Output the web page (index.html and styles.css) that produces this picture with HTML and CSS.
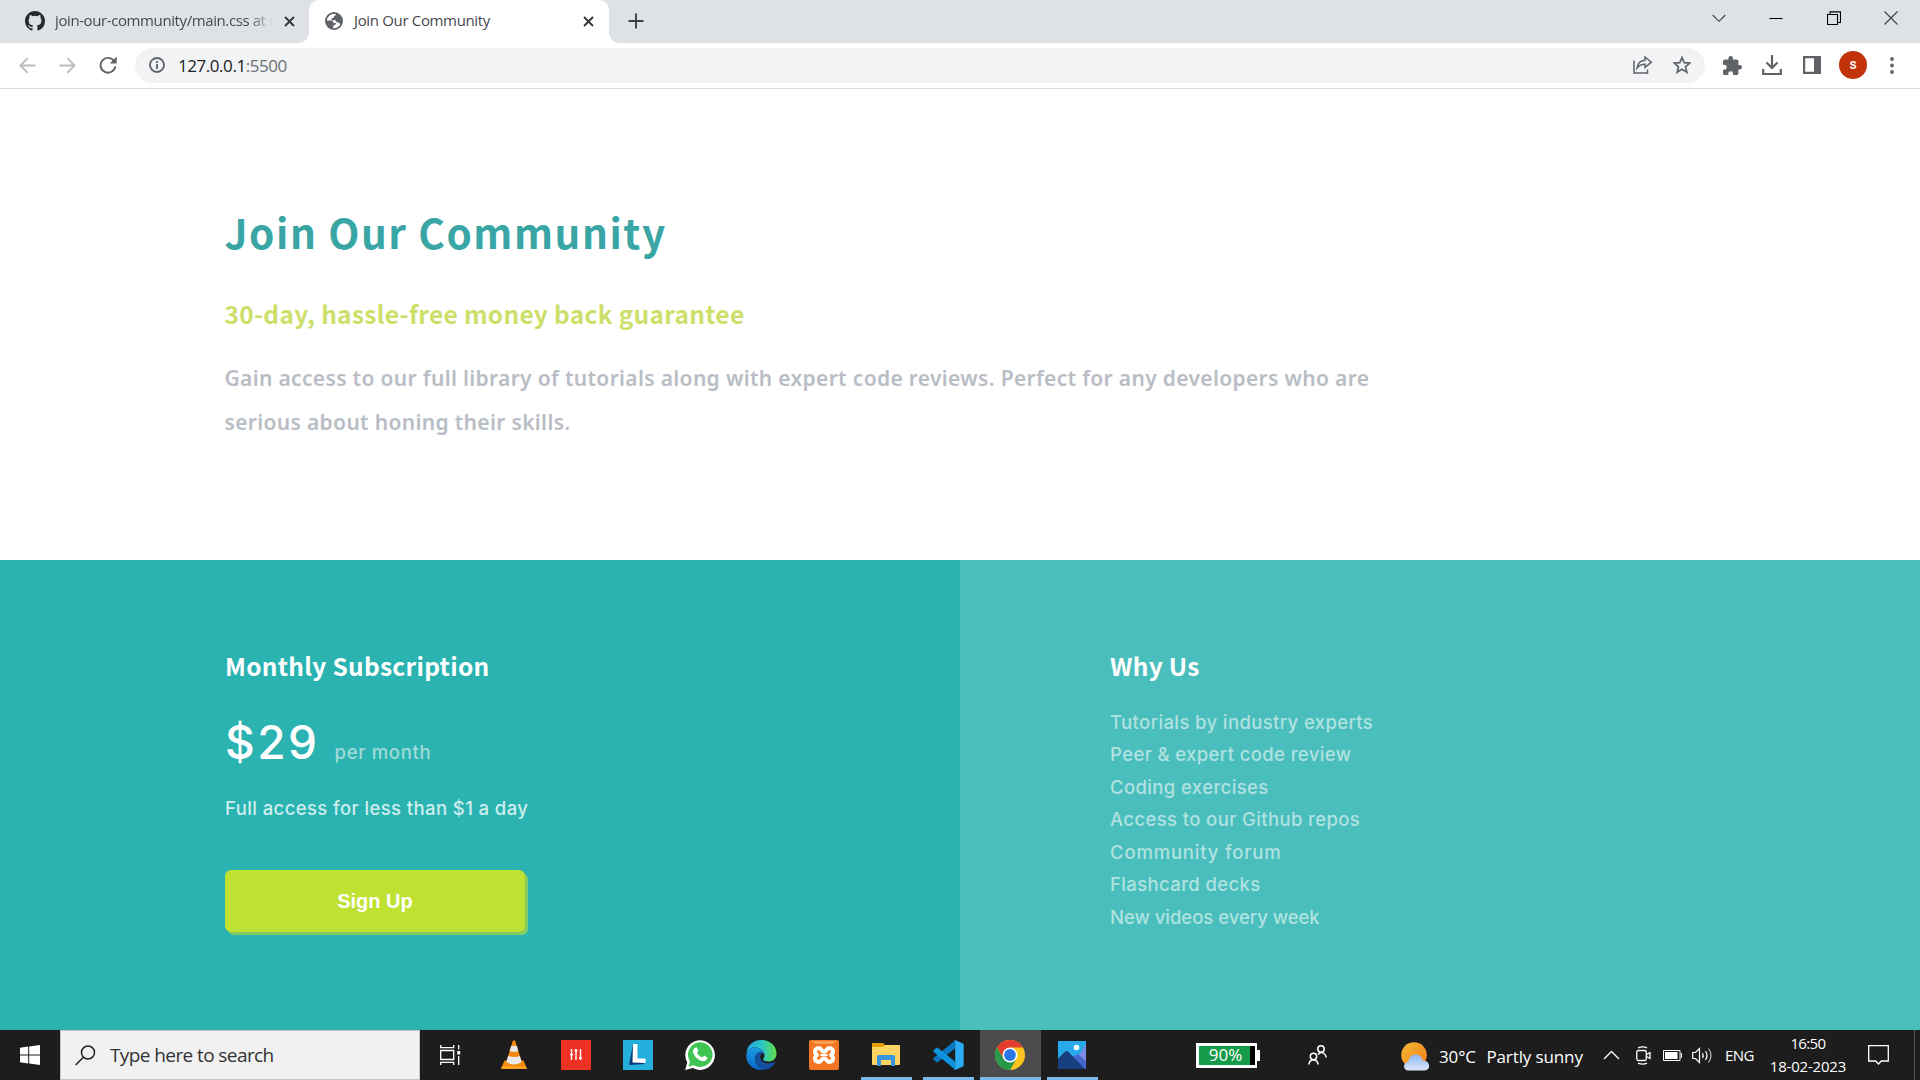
FILE: index.html
```html
<!DOCTYPE html>
<html lang="en">
<head>
<meta charset="utf-8">
<title>Join Our Community</title>
<link rel="stylesheet" href="styles.css">
</head>
<body>
<div class="screen">
  <header class="tabs">
    <div class="tab tab-github">
      <svg class="icon20" viewBox="0 0 16 16"><path fill="#24292f" d="M8 0C3.58 0 0 3.58 0 8c0 3.54 2.29 6.53 5.47 7.59.4.07.55-.17.55-.38 0-.19-.01-.82-.01-1.49-2.01.37-2.53-.49-2.69-.94-.09-.23-.48-.94-.82-1.13-.28-.15-.68-.52-.01-.53.63-.01 1.08.58 1.23.82.72 1.21 1.87.87 2.33.66.07-.52.28-.87.51-1.07-1.78-.2-3.64-.89-3.64-3.95 0-.87.31-1.59.82-2.15-.08-.2-.36-1.02.08-2.12 0 0 .67-.21 2.2.82a7.6 7.6 0 0 1 4 0c1.53-1.04 2.2-.82 2.2-.82.44 1.1.16 1.92.08 2.12.51.56.82 1.27.82 2.15 0 3.07-1.87 3.75-3.65 3.95.29.25.54.73.54 1.48 0 1.07-.01 1.93-.01 2.2 0 .21.15.46.55.38A8 8 0 0 0 16 8c0-4.42-3.58-8-8-8z"/></svg>
      <span class="tab-title tab-title-faded">join-our-community/main.css at m</span>
      <svg class="tab-close" viewBox="0 0 11 11"><path d="M1 1l9 9M10 1l-9 9"/></svg>
    </div>
    <div class="tab tab-active">
      <svg class="icon18" viewBox="0 0 18 18"><circle cx="9" cy="9" r="9" fill="#5f6368"/><path fill="#fff" d="M8.2 1.9c-3.4.5-6 3.2-6.3 6.5l4.200.2c1.500.1 2.300 1 2.300 2.400l2.100.1c.8.3.6 1.400-.3 1.700l-1.700.4v1.800c-.4.8-1.100 1-1.500 1.100 3.400.7 6.800-.9 8.300-3.900-.7-.6-.9-1.500-1.900-1.700l-1.700-.3-1.200-1.900H7.200c-1.200-.1-1.100-1.500-.1-2.100l1.800-.7.2-1.400 1.600-.8V2.100z"/></svg>
      <span class="tab-title">Join Our Community</span>
      <svg class="tab-close" viewBox="0 0 11 11"><path d="M1 1l9 9M10 1l-9 9"/></svg>
    </div>
    <svg class="new-tab" viewBox="0 0 16 16"><path d="M8 0.500v15M.5 8h15"/></svg>
    <div class="window-controls">
      <svg width="14" height="14" viewBox="0 0 14 14"><path d="M.7 4l6.300 6.300L13.300 4"/></svg>
      <svg width="14" height="14" viewBox="0 0 14 14"><path stroke="#000" d="M.5 7.500h13"/></svg>
      <svg width="14" height="14" viewBox="0 0 14 14"><path stroke="#000" d="M.5 3.500h10v10H.5zM3 3V.9h10.500V11.500H11"/></svg>
      <svg width="14" height="14" viewBox="0 0 14 14"><path d="M.5.5l13 13M13.500.5l-13 13"/></svg>
    </div>
  </header>

  <div class="toolbar">
    <div class="nav">
      <svg class="faint" width="17" height="17" viewBox="0 0 17 17"><path d="M16.500 8.500H1.500M8.700 1.200L1.400 8.500l7.300 7.300"/></svg>
      <svg class="faint" width="17" height="17" viewBox="0 0 17 17"><path d="M.5 8.500h15M8.300 1.200l7.300 7.300-7.300 7.300"/></svg>
      <svg class="reload" width="18" height="18" viewBox="0 0 18 18"><path d="M15.300 5.400A7.400 7.400 0 1 0 16.300 10.300"/><path class="solid" d="M17.700.5v7h-7z"/></svg>
    </div>
    <div class="omnibox">
      <svg width="16" height="16" viewBox="0 0 16 16"><circle cx="8" cy="8" r="7" fill="none" stroke="#5f6368" stroke-width="1.800"/><path d="M8 7v5M8 4v1.900" stroke="#5f6368" stroke-width="1.800"/></svg>
      <span class="url">127.0.0.1<span class="port">:5500</span></span>
      <svg class="share" width="20" height="18" viewBox="0 0 20 18"><path d="M1 4.500V17h13.500v-3.500M12 1l6.300 5.200L12 11.400V8.300C8.300 8.300 6 9.300 4 12c.5-4 3-7.300 8-7.700z"/></svg>
      <svg class="star" width="18" height="18" viewBox="0 0 18 18"><path d="M9 1.500l2.200 5.100 5.500.5-4.200 3.700 1.300 5.400L9 13.300l-4.800 2.900 1.300-5.400-4.200-3.700 5.500-.5z"/></svg>
    </div>
    <div class="extensions">
      <svg width="19" height="19" viewBox="2 1 21 21"><path fill="#5f6368" d="M20.500 11H19V7c0-1.100-.9-2-2-2h-4V3.500a2.500 2.500 0 0 0-5 0V5H4c-1.100 0-2 .9-2 2v3.800h1.500a2.700 2.700 0 0 1 0 5.400H2V20c0 1.100.9 2 2 2h3.800v-1.500a2.700 2.700 0 0 1 5.400 0V22H17c1.100 0 2-.9 2-2v-4h1.500a2.500 2.500 0 0 0 0-5z"/></svg>
      <svg width="20" height="20" viewBox="0 0 20 20"><path fill="none" stroke="#5f6368" stroke-width="2.200" d="M10 0v12.500M4.500 7.500l5.500 5.500 5.500-5.500M1.200 14v5h17.600v-5"/></svg>
      <svg width="18" height="18" viewBox="0 0 18 18"><path fill="#5f6368" fill-rule="evenodd" d="M0 0h18v18H0zM2.200 2.200v13.600h8.800V2.200z"/></svg>
      <span class="avatar">s</span>
      <svg width="4" height="17" viewBox="0 0 4 17"><g fill="#5f6368"><circle cx="2" cy="2" r="1.900"/><circle cx="2" cy="8.500" r="1.900"/><circle cx="2" cy="15" r="1.900"/></g></svg>
    </div>
  </div>

  <main>
    <section class="hero">
      <h1>Join Our Community</h1>
      <h2>30-day, hassle-free money back guarantee</h2>
      <p>Gain access to our full library of tutorials along with expert code reviews. Perfect for any developers who are serious about honing their skills.</p>
    </section>
    <section class="panels">
      <div class="subscription">
        <h3>Monthly Subscription</h3>
        <div class="price"><span class="amount">$29</span><span class="period">per month</span></div>
        <p class="access">Full access for less than $1 a day</p>
        <button class="signup">Sign Up</button>
      </div>
      <div class="why">
        <h3>Why Us</h3>
        <ul>
          <li>Tutorials by industry experts</li>
          <li>Peer &amp; expert code review</li>
          <li>Coding exercises</li>
          <li>Access to our Github repos</li>
          <li class="wide">Community forum</li>
          <li>Flashcard decks</li>
          <li class="tight">New videos every week</li>
        </ul>
      </div>
    </section>
  </main>

  <footer class="taskbar">
    <div class="start"><svg width="20" height="20" viewBox="0 0 20 20"><path fill="#fff" d="M0 2.700l8.200-1.200v8H0zM9.200 1.400L20 0v9.500H9.200zM0 10.500h8.200v8L0 17.300zM9.200 10.500H20V20L9.200 18.600z"/></svg></div>
    <div class="search">
      <svg width="21" height="21" viewBox="0 0 21 21"><circle cx="13" cy="7.500" r="6.500"/><path d="M8.300 12.300L.7 20"/></svg>
      <span>Type here to search</span>
    </div>
    <div class="app taskview"><svg width="21" height="20" viewBox="0 0 21 20"><g fill="none" stroke="#fff" stroke-width="1.300"><path d="M.7 0v2.700h13V0M.7 20v-2.700h13V20M.7 5.500h13v9H.7zM18.700 0v4.500M18.700 11v9"/></g><path fill="#fff" d="M17.200 6h3v3.500h-3z"/></svg></div>

    <div class="app"><svg width="26" height="30" viewBox="0 0 26 30"><path fill="#f28c0c" d="M3.500 20.500h19l3.300 7.800c.1.500-.1.700-.5.700H.7c-.4 0-.6-.3-.5-.700z"/><path fill="#ffa829" d="M1 26.500h24l.8 2H.2z"/><path fill="#f58712" d="M11.800.8q1.200-1 2.400 0l6.500 21.200q-7.700 5-15.400 0z"/><path fill="#e9e9e9" d="M10.200 6h5.600l1.600 5q-4.400 1.700-8.800 0zM7.100 16q5.900 2 11.800 0l1.800 6q-7.700 5-15.400 0z"/></svg></div>
    <div class="app"><svg width="30" height="30" viewBox="0 0 30 30"><path fill="#ee3125" d="M0 0h30v30H0z"/><path stroke="#fff" stroke-width="1.400" d="M10.500 9v11M15 9v11M19.500 9v11"/><path stroke="#fff" stroke-width="1.500" d="M9 14.500h3M13.500 10.500h3M18 18h3"/></svg></div>
    <div class="app"><svg width="30" height="30" viewBox="0 0 30 30"><path fill="#24aedb" d="M0 0h30v30H0z"/><path fill="#073b73" d="M10 4L6 25l16-1-8-5z"/><path fill="#fff" d="M10 4h4.500v14.500H22.500V23L9.500 22.500z"/></svg></div>
    <div class="app"><svg width="30" height="30" viewBox="0 0 30 30"><path fill="#fff" d="M.2 30l2-7.600A14.800 14.800 0 1 1 7.800 28z"/><path fill="#3fc351" d="M3.600 26.500l1.400-5.100A12.300 12.300 0 1 1 9 25.200z"/><path fill="#fff" d="M10.600 7.400c.8-.3 1.200 0 1.500.7l1.100 2.600c.2.600-.9 1.600-1.200 2 1.200 2.300 2.700 3.700 5.200 4.700.6-.5 1.400-2 2-1.700l2.700 1.300c1.200.6-.4 3.800-2.300 4.100-5 .9-11.600-5.300-11.700-9.900 0-1.600 1.300-3.300 2.700-3.800z"/></svg></div>
    <div class="app"><svg width="31" height="30" viewBox="0 0 31 30"><defs><linearGradient id="edgeTop"><stop offset="0" stop-color="#22a5e5"/><stop offset=".5" stop-color="#2ac5c8"/><stop offset="1" stop-color="#62df4b"/></linearGradient><linearGradient id="edgeLow" x2="0" y2="1"><stop offset="0" stop-color="#1b9de2"/><stop offset="1" stop-color="#0866cb"/></linearGradient></defs><path fill="url(#edgeTop)" d="M.5 13C1 5.500 7 0 15.500 0 24 0 30.500 6 30.500 13.500c0 5.500-4 8-8 8-3.500 0-5.500-1-5.500-2.200 0-.8 1.500-1.500 1.500-4.300C18.500 10 13 7.500 9 7.500 5 7.500 2 9.500.5 13z"/><path fill="url(#edgeLow)" d="M.5 14C1.500 9.500 5.500 7.500 9.500 7.500c5 0 9 3.500 9 7.500-1-2-3-3-5-2.500-4 1-5 5-4 9 1 4.500 5 7.500 9.500 8C8 31.500-1 24 .5 14z"/><path fill="#124f9e" d="M10.500 14c-3 5-.5 14 7.500 15.700 5 0 9-3 11-7 .3-.7-.3-1-1-.6-6 3-12 1-13.500-3.600-.6-2 0-3.700 1.500-5.500-2-.8-4.500-.5-5.500 1z"/></svg></div>
    <div class="app"><svg width="30" height="30" viewBox="0 0 30 30"><rect width="30" height="30" rx="2" fill="#f37623"/><path fill="#fba66b" d="M3 1.500h24q-1 2-5 2H8q-4 0-5-2z"/><path fill="none" stroke="#fff" stroke-width="4" stroke-linejoin="round" d="M9.500 8c2.500-.5 2.500 3.500 5.500 3.500s3-4 5.500-3.500c4.500 1 4.500 4.500 1.500 7 3 2.500 3 6-1.500 7-2.500.5-2.500-3.500-5.500-3.500s-3 4-5.500 3.500c-4.500-1-4.500-4.500-1.500-7-3-2.500-3-6 1.500-7z"/><path stroke="#fff" stroke-width="2.500" d="M11.500 15h7"/></svg></div>
    <div class="app running"><svg width="28" height="30" viewBox="0 0 28 30"><path fill="#e0a100" d="M0 4q0-1 1-1h10l2 2v3H0z"/><path fill="#fcd462" d="M0 7h11l2-2h14q1 0 1 1v18q0 1-1 1H1q-1 0-1-1z"/><path fill="#3994de" d="M5 26v-9q0-2 2-2h14q2 0 2 2v9h-4v-6H9v6z"/></svg></div>
    <div class="app running"><svg width="31" height="30" viewBox="0 0 31 30"><path fill="#0a78c1" d="M22 .5v8L5 22q-1 .8-1.900 0L.7 19.800q-.8-.9 0-1.800z"/><path fill="#0f93dc" d="M22 29.500v-8L5 8q-1-.8-1.900 0L.7 10.200q-.8.900 0 1.800z"/><path fill="#2cacf4" d="M22.500.200L30 3.500q.7.400.7 1.200v20.600q0 .8-.7 1.200l-7.500 3.300q-1 .3-1.800-.5 1.500.5 1.500-1.200V2q0-1.800-1.500-1.300.8-.8 1.800-.5z"/></svg></div>
    <div class="app running focused"><svg width="30" height="30" viewBox="0 0 30 30"><circle cx="15" cy="15" r="15" fill="#fcc31e"/><path fill="#e33b2e" d="M2 7.500a15 15 0 0 1 26 0H15L8.500 18.800z"/><path fill="#26994a" d="M2 7.500l6.500 11.300L21.500 18.800 15 30A15 15 0 0 1 2 7.500z"/><circle cx="15" cy="15" r="7.500" fill="#fff"/><circle cx="15" cy="15" r="5.900" fill="#2b76e5"/></svg></div>
    <div class="app running"><svg width="28" height="28" viewBox="0 0 28 28"><path fill="#27a9ea" d="M0 0h28v28H0z"/><path fill="#7a8ce4" d="M28 3v25H12z"/><path fill="#4467c9" d="M13 18.500l5-4.700q1.500-1.200 3 0l7 6.700V28H13z"/><path fill="#173f80" d="M0 17.500L7 10.700q1.700-1.400 3.400 0L27 28H0z"/><circle cx="18.500" cy="6.500" r="2.800" fill="#fff"/></svg></div>

    <div class="battery"><span class="battery-body"><span class="battery-level">90%</span></span><span class="battery-nub"></span></div>
    <svg class="people" width="19" height="20" viewBox="0 0 19 20"><g fill="none" stroke="#fff" stroke-width="1.500"><circle cx="13" cy="4" r="3.200"/><circle cx="5.500" cy="11.500" r="3.200"/><path d="M10 9.500q3-3.500 6-1 2 1.500 2.200 4M.8 19.500q.5-4.500 4.700-4.800 4 .3 4.700 4.800"/></g></svg>
    <svg class="weather" width="29" height="29" viewBox="0 0 29 29"><defs><linearGradient id="sun" x2="1" y2="1"><stop offset="0" stop-color="#f4bd32"/><stop offset="1" stop-color="#f4781a"/></linearGradient><linearGradient id="cloud" x2="0" y2="1"><stop offset="0" stop-color="#8fb5f1"/><stop offset="1" stop-color="#dbe8fb"/></linearGradient></defs><circle cx="13" cy="13" r="12.800" fill="url(#sun)"/><path fill="url(#cloud)" d="M7.500 28.500C1.500 28.500 1.500 20.500 7.500 19.500 8.500 10.500 20 10.500 21.500 18.500c8-.5 9 10 2 10z"/></svg>
    <span class="temp">30°C</span><span class="sky">Partly sunny</span>
    <svg class="up" width="17" height="10" viewBox="0 0 17 10"><path d="M1 9l7.500-7.500L16 9"/></svg>
    <svg class="camera" width="15" height="19" viewBox="0 0 15 19"><g fill="none" stroke="#fff" stroke-width="1.300"><rect x=".8" y="4.500" width="9.500" height="10" rx="1.500"/><path d="M10.500 8.500l3.500-2v6l-3.500-2M2 1.800q5-2 9 0M2 17.200q5 2 9 0"/></g></svg>
    <svg class="cell" width="19" height="11" viewBox="0 0 19 11"><path fill="none" stroke="#fff" d="M.5.5h16.500v10H.5zM17.500 3.500h1v4h-1"/><path fill="#fff" d="M2 2h12.500v7H2z"/></svg>
    <svg class="speaker" width="21" height="17" viewBox="0 0 21 17"><g fill="none" stroke="#fff" stroke-width="1.200"><path d="M.7 5.500h2.800L7.500 1.500v14l-4-4H.7zM10.500 6q1.500 2.500 0 5M13.500 4q3 4.500 0 9"/><path stroke="#bbb" d="M16.500 1.500q5 7 0 14"/></g></svg>
    <span class="lang">ENG</span>
    <div class="clock"><span class="time">16:50</span><span class="date">18-02-2023</span></div>
    <svg class="notify" width="21" height="20" viewBox="0 0 21 20"><path d="M.7.7h19.600v15.300h-7l-2.800 3-2.800-3h-7z"/></svg>
    <span class="peek"></span>
  </footer>
</div>
</body>
</html>
```
FILE: styles.css
```css
* { box-sizing: border-box; }
body { margin: 0; font-family: "Open Sans", "Noto Sans", sans-serif; }
svg { display: block; flex: none; }
h1, h2, h3, p, ul { margin: 0; padding: 0; }
.screen { width: 1920px; height: 1080px; overflow: hidden; display: flex; flex-direction: column; background: #fff; }

/* tab strip */
.tabs { height: 43px; flex: none; display: flex; background: #dee1e6; }
.tab { height: 43px; display: flex; align-items: center; color: #45494d; font-size: 15px; letter-spacing: -.34px; white-space: nowrap; }
.tab-github { width: 309px; padding: 0 14px 2px 25px; border-radius: 0 0 10px 0; background: #dee1e6; }
.tab-active { width: 300px; padding: 0 15px 2px 16px; border-radius: 10px 10px 0 0; background: #fff; position: relative; }
.tab-active::before, .tab-active::after { content: ""; position: absolute; bottom: 0; width: 10px; height: 10px; }
.tab-active::before { left: -10px; background: radial-gradient(circle at 0 0, #dee1e6 9.500px, #fff 10px); }
.tab-active::after { right: -10px; background: radial-gradient(circle at 100% 0, #dee1e6 9.500px, #fff 10px); }
.icon20 { width: 20px; height: 20px; margin-right: 10px; }
.icon18 { width: 18px; height: 18px; margin-right: 11px; }
.tab-title { flex: 1; padding-bottom: 1px; }
.tab-title-faded { flex: none; width: 220px; overflow: hidden; letter-spacing: -.4px; -webkit-mask-image: linear-gradient(90deg, #000 88%, transparent 99%); mask-image: linear-gradient(90deg, #000 88%, transparent 99%); }
.tab-github .tab-close { margin-left: auto; }
.tab-close { width: 11px; height: 11px; margin-top: 1px; fill: none; stroke: #303336; stroke-width: 1.800; }
.new-tab { width: 16px; height: 16px; margin: 13px 0 0 19px; fill: none; stroke: #3c4043; stroke-width: 1.900; }
.window-controls { margin-left: auto; padding: 11px 22px 0 0; display: flex; gap: 43.300px; fill: none; stroke: #3c3c3c; stroke-width: 1.100; }

/* toolbar */
.toolbar { height: 46px; flex: none; display: flex; align-items: center; padding: 0 25px 1px 19px; border-bottom: 1px solid #dadce0; }
.nav { width: 116px; display: flex; gap: 23px; align-items: center; fill: none; stroke: #5f6368; stroke-width: 1.900; }
.faint { stroke: #babcbe; }
.nav .solid { fill: #5f6368; stroke: none; }
.omnibox { width: 1570px; height: 35px; display: flex; align-items: center; padding: 0 14px; border-radius: 18px; background: #f1f3f4; }
.url { margin-left: 13px; font-size: 17px; letter-spacing: -.45px; color: #202124; }
.port { color: #6d7175; }
.share { margin-left: auto; fill: none; stroke: #5f6368; stroke-width: 1.500; }
.star { margin: 0 0 0 20px; fill: none; stroke: #5f6368; stroke-width: 1.700; }
.extensions { flex: 1; display: grid; grid-template-columns: 19px 20px 18px 28px 4px; column-gap: 20px; align-items: center; padding-left: 18px; }
.extensions svg:nth-child(3) { margin-left: 1px; }
.avatar { width: 28px; height: 28px; margin-left: -1px; border-radius: 50%; background: #c2330b; color: #fff; font: 500 14px/26px Roboto, sans-serif; text-align: center; }
.extensions svg:last-child { margin-left: 2px; }

/* hero */
.hero { height: 471px; padding: 112px 0 0 224.500px; color: #b9bdc5; }
h1, h2, h3 { font-family: "Noto Sans CJK SC", "Noto Sans", sans-serif; font-weight: 700; }
h1 { padding-top: 1px; font-size: 40.500px; line-height: 59px; letter-spacing: 1.570px; color: #39a6a5; }
h2 { margin-top: 33px; font-size: 24.500px; line-height: 40px; letter-spacing: .29px; color: #cddf69; }
.hero p { width: 1170px; margin-top: 21.500px; font: 600 21px/44px "Noto Sans", sans-serif; letter-spacing: .33px; }

/* panels */
.panels { height: 470px; display: grid; grid-template-columns: 1fr 1fr; font: 500 18.500px/30px Inter, sans-serif; color: #fff; }
.subscription { padding: 86px 0 0 225px; background: #2bb3b1; }
.why { padding: 86px 0 0 150px; background: #4abebd; }
h3 { font-size: 24.500px; line-height: 40px; letter-spacing: .28px; }
.price { height: 60px; margin-top: 26px; display: flex; align-items: baseline; }
.amount { font-size: 46px; line-height: 60px; letter-spacing: 2.500px; }
.period { margin-left: 15px; letter-spacing: .7px; color: #a0dbd8; }
.access { margin-top: 21px; letter-spacing: .4px; color: #cdeeed; }
.signup { display: block; width: 300px; height: 62px; margin-top: 47px; padding: 0 8px 0 8px; border: 0; border-radius: 6px; background: #bfe132; box-shadow: 3px 3px 0 #85cd62; color: #fff; font: 700 20px "Liberation Sans", sans-serif; }
ul { margin-top: 20px; list-style: none; line-height: 32.450px; letter-spacing: .38px; color: #b0e2e0; }
.wide { letter-spacing: .82px; }
.tight { letter-spacing: -.03px; }

/* taskbar */
.taskbar { height: 50px; flex: none; display: flex; align-items: center; background: #1d1d1d; color: #fff; white-space: nowrap; }
.start { width: 60px; display: flex; justify-content: center; }
.search { width: 360px; height: 50px; display: flex; align-items: center; padding: 0 14px; border: 1px solid #c4c4c4; background: #f1f1f1; color: #333; font-size: 19px; letter-spacing: -.59px; }
.search svg { margin-right: 14px; fill: none; stroke: #222; stroke-width: 1.500; }
.app { width: 62.100px; height: 50px; display: flex; align-items: center; justify-content: center; }
.taskview { width: 62.500px; padding-right: 2px; }
.running { background: linear-gradient(#79b8ec, #79b8ec) center bottom / 51px 3px no-repeat; }
.focused { background: linear-gradient(#79b8ec, #79b8ec) center bottom / 61px 3px no-repeat, linear-gradient(#4b4b4b, #4b4b4b) center / 61px 50px no-repeat; }
.battery { margin-left: 92.500px; display: flex; align-items: center; }
.battery-body { width: 61px; height: 25px; padding-right: 5px; border: 3px solid #fff; border-right-width: 2px; background: #000; display: flex; }
.battery-level { flex: 1; padding-left: 2px; background: #169c48; font-size: 17px; line-height: 18px; text-align: center; }
.battery-nub { width: 3px; height: 11px; background: #fff; }
.people { margin-left: 48px; }
.weather { margin: 2px 0 0 74px; }
.temp, .sky { margin-top: 2px; font-size: 17px; letter-spacing: -.12px; }
.temp { width: 47.500px; margin-left: 9px; }
.sky { width: 98px; }
.up { margin-left: 19px; fill: none; stroke: #fff; stroke-width: 1.300; }
.camera { margin-left: 15.500px; }
.cell { margin-left: 12px; }
.speaker { margin-left: 10px; }
.lang { width: 30px; margin: 0 0 0 12px; font-size: 15px; letter-spacing: -.5px; }
.clock { width: 78px; margin-left: 14px; display: flex; flex-direction: column; align-items: center; font-size: 15px; line-height: 23px; letter-spacing: -.2px; }
.time { letter-spacing: -.65px; }
.notify { margin-left: 21.500px; fill: none; stroke: #fff; stroke-width: 1.300; }
.peek { width: 1px; height: 50px; margin-left: auto; margin-right: 5px; background: #555; }
```
